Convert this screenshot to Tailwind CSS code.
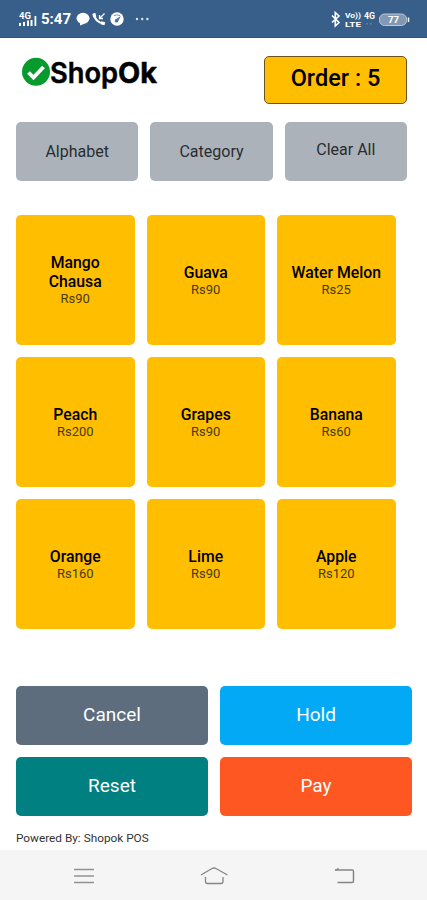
<!DOCTYPE html>
<html lang="en">
<head>
<meta charset="utf-8">
<title>ShopOk POS</title>
<script src="https://cdn.jsdelivr.net/npm/@tailwindcss/browser@4"></script>
</head>
<body class="bg-white">
<div class="flex h-[900px] w-[427px] flex-col overflow-hidden bg-white font-['Roboto',sans-serif] text-black">
  <header class="flex h-[38px] shrink-0 items-center justify-between border-b border-[#2d5680] bg-[#375f8a] pr-[17px] pl-[18px] text-white">
    <div class="flex items-center pt-px">
      <svg class="h-[18px] w-[19px]" viewBox="0 0 19 18" fill="#fff">
        <text x="1" y="9" font-family="Roboto" font-size="9" font-weight="700" textLength="12" lengthAdjust="spacingAndGlyphs">4G</text>
        <path d="M1 13h2v3H1zM5 12h2v4H5zM9 10.500h2v5.500H9zM12.500 10h2V16h-2zM16.500 6h1.800v10h-1.800z"/>
      </svg>
      <span class="ml-[4px] w-[31px] text-[15px] leading-5 font-bold">5:47</span>
      <svg class="ml-[4px] h-[14px] w-[14px]" viewBox="0 0 14 14" fill="#fff"><ellipse cx="7" cy="6.300" rx="6.500" ry="5.500"/><path d="M4 10v3.500l5-2z"/></svg>
      <svg class="ml-[2px] h-[14px] w-[14px]" viewBox="0 0 14 14" fill="none" stroke="#fff"><path d="M2 1.500Q2.500 10 12.500 12" stroke-width="2.200"/><path d="M1.800 1.500l1 3.500M9 10.800l3.700 1" stroke-width="3.200"/><path d="M12.500 1.500L7.500 6.500M7.500 3v3.500H11" stroke-width="1.300"/></svg>
      <svg class="ml-[4px] h-[14px] w-[14px]" viewBox="0 0 14 14"><circle cx="7" cy="7" r="6.700" fill="#fff"/><path d="M3.800 3.800Q7 1.800 10 3.600" fill="none" stroke="#7892ad"/><path d="M10.800 4L8.300 9A1.800 1.800 0 1 1 6.200 7z" fill="#52749a"/></svg>
      <svg class="ml-[11px] h-[4px] w-[14px]" viewBox="0 0 14 4" fill="#dce5ee"><circle cx="2" cy="2" r="1.200"/><circle cx="7.200" cy="2" r="1.200"/><circle cx="12.400" cy="2" r="1.200"/></svg>
    </div>
    <div class="flex items-center">
      <svg class="h-[18px] w-[14px]" viewBox="0 0 14 18"><path d="M2 5.500l7 7-3.700 3.500V2.500L9 6l-7 6.500" fill="none" stroke="#fff" stroke-width="1.600"/></svg>
      <svg class="ml-px h-[20px] w-[17px]" viewBox="0 0 17 20" font-family="Roboto" font-weight="700" fill="#fff">
        <text x="0" y="9" font-size="7" textLength="16" lengthAdjust="spacingAndGlyphs">Vo))</text>
        <text x="0" y="17.500" font-size="7.500" textLength="16" lengthAdjust="spacingAndGlyphs">LTE</text>
      </svg>
      <svg class="ml-[2px] h-[18px] w-[13px]" viewBox="0 0 13 18" font-family="Roboto" font-weight="700" fill="#fff">
        <text x="0" y="9" font-size="8.500" textLength="11" lengthAdjust="spacingAndGlyphs">4G</text>
        <path d="M2 13h2v1.500H2zM6 13h2v1.500H6z" fill="#5d7da0"/>
      </svg>
      <svg class="ml-[2px] h-[18px] w-[31px]" viewBox="0 0 31 18" font-family="Roboto" font-weight="700" fill="#fff">
        <rect x=".5" y="4" width="27" height="11.500" rx="5" fill="#8199b3" stroke="#b9c8d7"/>
        <path d="M29.500 7.500v4.500" stroke="#fff" stroke-width="1.500"/>
        <text x="9" y="13" font-size="9" textLength="11" lengthAdjust="spacingAndGlyphs">77</text>
      </svg>
    </div>
  </header>

  <main class="flex h-[812px] shrink-0 flex-col pr-[15px] pl-[16px]">
    <div class="flex h-[84px] shrink-0 items-start justify-between pt-[18px] pr-[5px] pl-[6px]">
      <svg class="h-[34px] w-[137px]" viewBox="0 0 137 34">
        <circle cx="14" cy="15.800" r="14" fill="#079a2c"/>
        <path d="M6.500 16.500l5 5L21.500 11" fill="none" stroke="#fff" stroke-width="3.800"/>
        <text x="28" y="26.500" font-family="Inter" font-size="28" font-weight="600" stroke="#000" stroke-width=".5" textLength="68" lengthAdjust="spacingAndGlyphs">Shop</text>
        <text x="96" y="26.500" font-family="Inter" font-size="28" font-weight="700" stroke="#000" stroke-width=".5" textLength="39" lengthAdjust="spacingAndGlyphs">Ok</text>
      </svg>
      <button class="h-[48px] w-[143px] rounded-[5px] border border-[#695322] bg-[#ffbf00] pb-[2px] text-[23.500px] font-medium">Order : 5</button>
    </div>

    <div class="grid h-[59px] w-[391px] shrink-0 grid-cols-3 gap-[12px] text-[16px] text-[#292d31]">
      <button class="rounded-[5px] bg-[#abb2b9]">Alphabet</button>
      <button class="rounded-[5px] bg-[#abb2b9]">Category</button>
      <button class="rounded-[5px] bg-[#abb2b9] pb-[3px]">Clear All</button>
    </div>

    <div class="mt-[34px] grid w-[379.500px] shrink-0 grid-cols-3 grid-rows-[130px_130px_130px] gap-[12px] text-center text-[15.800px] leading-[18px] font-medium">
      <div class="flex flex-col items-center justify-center rounded-[5px] bg-[#ffbf00]"><span class="w-[70px] leading-[18.500px]">Mango Chausa</span><span class="text-[13px] leading-[15px] font-normal text-[#493a0b]">Rs90</span></div>
      <div class="flex flex-col items-center justify-center rounded-[5px] bg-[#ffbf00]"><span>Guava</span><span class="text-[13px] leading-[15px] font-normal text-[#493a0b]">Rs90</span></div>
      <div class="flex flex-col items-center justify-center rounded-[5px] bg-[#ffbf00]"><span>Water Melon</span><span class="text-[13px] leading-[15px] font-normal text-[#493a0b]">Rs25</span></div>
      <div class="flex flex-col items-center justify-center rounded-[5px] bg-[#ffbf00]"><span>Peach</span><span class="text-[13px] leading-[15px] font-normal text-[#493a0b]">Rs200</span></div>
      <div class="flex flex-col items-center justify-center rounded-[5px] bg-[#ffbf00]"><span>Grapes</span><span class="text-[13px] leading-[15px] font-normal text-[#493a0b]">Rs90</span></div>
      <div class="flex flex-col items-center justify-center rounded-[5px] bg-[#ffbf00]"><span>Banana</span><span class="text-[13px] leading-[15px] font-normal text-[#493a0b]">Rs60</span></div>
      <div class="flex flex-col items-center justify-center rounded-[5px] bg-[#ffbf00]"><span>Orange</span><span class="text-[13px] leading-[15px] font-normal text-[#493a0b]">Rs160</span></div>
      <div class="flex flex-col items-center justify-center rounded-[5px] bg-[#ffbf00]"><span>Lime</span><span class="text-[13px] leading-[15px] font-normal text-[#493a0b]">Rs90</span></div>
      <div class="flex flex-col items-center justify-center rounded-[5px] bg-[#ffbf00]"><span>Apple</span><span class="text-[13px] leading-[15px] font-normal text-[#493a0b]">Rs120</span></div>
    </div>

    <div class="mt-[57px] grid shrink-0 grid-cols-2 grid-rows-[59px_59px] gap-[12px] text-[19px] text-white">
      <button class="rounded-[5px] bg-[#5d6d7e]">Cancel</button>
      <button class="rounded-[5px] bg-[#03a9f5]">Hold</button>
      <button class="rounded-[5px] bg-[#008080]">Reset</button>
      <button class="rounded-[5px] bg-[#ff5722]">Pay</button>
    </div>
    <p class="mt-[15px] text-[11.800px] leading-[14px] text-[#333]">Powered By: Shopok POS</p>
  </main>

  <nav class="flex h-[50px] shrink-0 items-center justify-between bg-[#f5f5f5] px-[71px] pb-px">
    <svg class="h-[20px] w-[26px]" viewBox="0 0 26 20" fill="none" stroke="#929292" stroke-width="1.600"><path d="M3 4.500h20M3 11h20M3 17.500h20"/></svg>
    <svg class="h-[20px] w-[30px]" viewBox="0 0 30 20" fill="none" stroke="#858585" stroke-width="1.300"><path d="M2 10L13 3.500q2-1 4 0L28.500 10M6.500 12v4.500q0 2 2 2h13.500q2 0 2-2v-4.500"/></svg>
    <svg class="h-[20px] w-[26px]" viewBox="0 0 26 20" fill="none" stroke="#858585" stroke-width="1.500"><path d="M5 5h17q1.500 0 1.500 1.500v9.500q0 1.500-1.500 1.500H7.500"/><path d="M4.500 5.500L8.500 2.500v2.500z" fill="#858585" stroke="none"/></svg>
  </nav>
</div>
</body>
</html>
